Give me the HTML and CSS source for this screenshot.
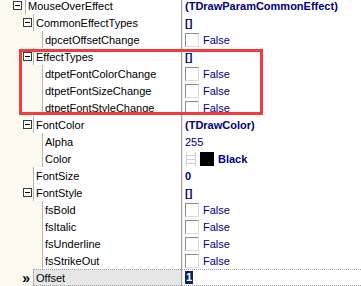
FILE: index.html
```html
<!DOCTYPE html>
<html lang="en">
<head>
    <meta charset="UTF-8">
    <title>Inspector</title>
    <link rel="stylesheet" href="styles.css">
</head>
<body>
    <div class="inspector">
        <div class="row">
            <div class="name lvl1"><span class="gutter"><svg class="toggle" width="9" height="9" viewBox="0 0 9 9"><rect x="0.5" y="0.5" width="8" height="8" fill="#fff" stroke="#3a3a3a"/><line x1="2" y1="4.5" x2="7" y2="4.5" stroke="#000"/></svg></span><span class="label">MouseOverEffect</span></div>
            <div class="value"><b>(TDrawParamCommonEffect)</b></div>
        </div>
        <div class="row">
            <div class="name lvl2"><span class="gutter"><svg class="toggle" width="9" height="9" viewBox="0 0 9 9"><rect x="0.5" y="0.5" width="8" height="8" fill="#fff" stroke="#3a3a3a"/><line x1="2" y1="4.5" x2="7" y2="4.5" stroke="#000"/></svg></span><span class="label">CommonEffectTypes</span></div>
            <div class="value"><b>[]</b></div>
        </div>
        <div class="row">
            <div class="name lvl3"><span class="gutter"></span><span class="label">dpcetOffsetChange</span></div>
            <div class="value"><span class="check"></span>False</div>
        </div>
        <div class="row">
            <div class="name lvl2"><span class="gutter"><svg class="toggle" width="9" height="9" viewBox="0 0 9 9"><rect x="0.5" y="0.5" width="8" height="8" fill="#fff" stroke="#3a3a3a"/><line x1="2" y1="4.5" x2="7" y2="4.5" stroke="#000"/></svg></span><span class="label">EffectTypes</span></div>
            <div class="value"><b>[]</b></div>
        </div>
        <div class="row">
            <div class="name lvl3"><span class="gutter"></span><span class="label">dtpetFontColorChange</span></div>
            <div class="value"><span class="check"></span>False</div>
        </div>
        <div class="row">
            <div class="name lvl3"><span class="gutter"></span><span class="label">dtpetFontSizeChange</span></div>
            <div class="value"><span class="check"></span>False</div>
        </div>
        <div class="row">
            <div class="name lvl3"><span class="gutter"></span><span class="label">dtpetFontStyleChange</span></div>
            <div class="value"><span class="check"></span>False</div>
        </div>
        <div class="row">
            <div class="name lvl2"><span class="gutter"><svg class="toggle" width="9" height="9" viewBox="0 0 9 9"><rect x="0.5" y="0.5" width="8" height="8" fill="#fff" stroke="#3a3a3a"/><line x1="2" y1="4.5" x2="7" y2="4.5" stroke="#000"/></svg></span><span class="label">FontColor</span></div>
            <div class="value"><b>(TDrawColor)</b></div>
        </div>
        <div class="row">
            <div class="name lvl3"><span class="gutter"></span><span class="label">Alpha</span></div>
            <div class="value">255</div>
        </div>
        <div class="row">
            <div class="name lvl3"><span class="gutter"></span><span class="label">Color</span></div>
            <div class="value">
                <svg class="grip" width="12" height="14" viewBox="0 0 12 14"><g stroke="#cfcfcf" fill="none"><line x1="1.5" y1="0" x2="1.5" y2="14"/><line x1="10.5" y1="0" x2="10.5" y2="14"/><line x1="2" y1="3.5" x2="10" y2="3.5"/><line x1="2" y1="7.5" x2="10" y2="7.5"/><line x1="2" y1="11.5" x2="10" y2="11.5"/></g></svg>
                <span class="swatch"></span><b>Black</b>
            </div>
        </div>
        <div class="row">
            <div class="name lvl2"><span class="gutter"></span><span class="label">FontSize</span></div>
            <div class="value"><b>0</b></div>
        </div>
        <div class="row">
            <div class="name lvl2"><span class="gutter"><svg class="toggle" width="9" height="9" viewBox="0 0 9 9"><rect x="0.5" y="0.5" width="8" height="8" fill="#fff" stroke="#3a3a3a"/><line x1="2" y1="4.5" x2="7" y2="4.5" stroke="#000"/></svg></span><span class="label">FontStyle</span></div>
            <div class="value"><b>[]</b></div>
        </div>
        <div class="row">
            <div class="name lvl3"><span class="gutter"></span><span class="label">fsBold</span></div>
            <div class="value"><span class="check"></span>False</div>
        </div>
        <div class="row">
            <div class="name lvl3"><span class="gutter"></span><span class="label">fsItalic</span></div>
            <div class="value"><span class="check"></span>False</div>
        </div>
        <div class="row">
            <div class="name lvl3"><span class="gutter"></span><span class="label">fsUnderline</span></div>
            <div class="value"><span class="check"></span>False</div>
        </div>
        <div class="row">
            <div class="name lvl3"><span class="gutter"></span><span class="label">fsStrikeOut</span></div>
            <div class="value"><span class="check"></span>False</div>
        </div>
        <div class="row selected">
            <div class="name lvl2"><span class="gutter"><span class="marker">&raquo;</span></span><span class="label">Offset</span></div>
            <div class="value"><span class="edit">1</span></div>
        </div>

        <div class="highlight"></div>
    </div>
</body>
</html>
```

FILE: styles.css
```css
body {
    margin: 0;
    padding: 0;
    background-color: #fff;
    font-family: "Liberation Sans", Arial, sans-serif;
    font-size: 11px;
    overflow: hidden;
}

.inspector {
    position: relative;
    width: 361px;
    height: 286px;
    overflow: hidden;
}

.row {
    display: flex;
    height: 17px;
}

.row:first-child {
    margin-top: -3px;
}

.name {
    display: flex;
    width: 181px;
    flex-shrink: 0;
    color: #000;
}

.gutter {
    display: flex;
    align-items: center;
    justify-content: flex-end;
    flex-shrink: 0;
    background-color: #fbf9f0;
    box-sizing: border-box;
}

.lvl1 .gutter { width: 25px; padding-right: 3px; }
.lvl2 .gutter { width: 33px; padding-right: 1px; }
.lvl3 .gutter { width: 42px; }

.label {
    flex: 1;
    display: flex;
    align-items: center;
    padding-left: 2px;
    border-left: 1px solid #b4b4b4;
    white-space: nowrap;
}

.value {
    flex: 1;
    display: flex;
    align-items: center;
    padding-left: 3px;
    border-left: 1px solid #a0a0a0;
    box-shadow: inset 1px 0 0 #e8e8e8;
    color: #000080;
    white-space: nowrap;
}

.check {
    width: 14px;
    height: 14px;
    box-sizing: border-box;
    margin-right: 4px;
    background: #fff;
    border-top: 1px solid #8a8a8a;
    border-left: 1px solid #8a8a8a;
    border-right: 1px solid #dcdcdc;
    border-bottom: 1px solid #dcdcdc;
}

.grip {
    margin-right: 3px;
}

.swatch {
    width: 14px;
    height: 14px;
    background: #000;
    margin-right: 4px;
}

.marker {
    font-weight: bold;
    font-size: 14px;
    line-height: 14px;
    margin-right: 2px;
    color: #000;
}

.selected .label {
    background-color: #e6e6e6;
    border-top: 1px dotted #a0a0a0;
    border-bottom: 1px dotted #a0a0a0;
}

.selected .value {
    border-top: 1px dotted #a0a0a0;
    border-bottom: 1px dotted #a0a0a0;
}

.edit {
    background-color: #0a246a;
    color: #fff;
    font-weight: bold;
    padding: 0 1px;
    line-height: 13px;
}

.highlight {
    position: absolute;
    left: 19px;
    top: 49px;
    width: 244px;
    height: 66px;
    box-sizing: border-box;
    border: 3px solid #f23b3b;
}
```
